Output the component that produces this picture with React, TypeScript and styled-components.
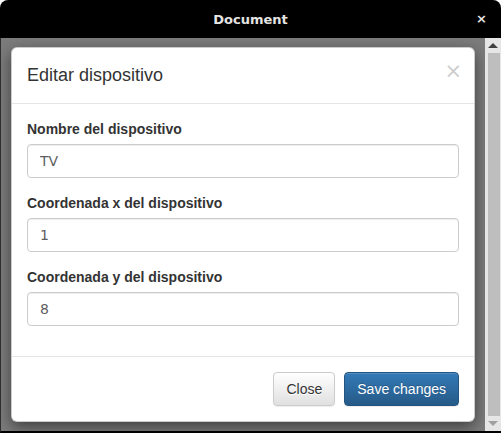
import React from "react";
import styled, { createGlobalStyle } from "styled-components";

const GlobalStyle = createGlobalStyle`
	html, body {
		margin: 0;
		padding: 0;
		background: #ffffff;
	}
	* {
		box-sizing: border-box;
	}
`;

const fields = [
	{ label: "Nombre del dispositivo", value: "TV" },
	{ label: "Coordenada x del dispositivo", value: "1" },
	{ label: "Coordenada y del dispositivo", value: "8" },
];

const App = () => {
	return (
		<>
			<GlobalStyle />
			<Window>
				<TitleBar>
					<WindowTitle>Document</WindowTitle>
					<WindowClose>×</WindowClose>
				</TitleBar>

				<Content>
					<Viewport>
						<Dialog>
							<DialogHeader>
								<DialogTitle>Editar dispositivo</DialogTitle>
								<DismissButton>×</DismissButton>
							</DialogHeader>

							<DialogBody>
								{fields.map((field) => (
									<FormGroup key={field.label}>
										<Label>{field.label}</Label>
										<Input readOnly value={field.value} />
									</FormGroup>
								))}
							</DialogBody>

							<DialogFooter>
								<Button>Close</Button>
								<Button $primary>Save changes</Button>
							</DialogFooter>
						</Dialog>
					</Viewport>

					<Scrollbar>
						<ScrollArrow $dir="up" />
						<ScrollTrack>
							<ScrollThumb />
						</ScrollTrack>
						<ScrollArrow $dir="down" />
					</Scrollbar>
				</Content>
			</Window>
		</>
	);
};

export default App;

const Window = styled.div`
	width: 501px;
	height: 433px;

	display: flex;
	flex-direction: column;

	background: #000;
	border-radius: 8px 8px 0 0;
	overflow: hidden;
`;

const TitleBar = styled.div`
	height: 38px;
	flex-shrink: 0;

	display: flex;
	align-items: center;
	justify-content: center;

	position: relative;
`;

const WindowTitle = styled.div`
	font-family: "DejaVu Sans", sans-serif;
	font-weight: 700;
	font-size: 13px;
	color: #e4e4e2;
`;

const WindowClose = styled.div`
	position: absolute;
	right: 14px;
	top: 11px;

	font-family: "DejaVu Sans", sans-serif;
	font-weight: 700;
	font-size: 13px;
	color: #e4e4e2;
`;

const Content = styled.div`
	flex: 1;
	min-height: 0;

	display: flex;

	border-left: 1px solid #2e2e2e;
	border-bottom: 2px solid #000;
`;

const Viewport = styled.div`
	flex: 1;
	min-width: 0;

	background: #7c7c7c;
	padding: 9px 10px 0 10px;
	overflow: hidden;
`;

const Dialog = styled.div`
	background: #fff;
	border: 1px solid rgba(0, 0, 0, 0.2);
	border-radius: 6px;
	box-shadow: 0 5px 15px rgba(0, 0, 0, 0.5);

	font-family: "Liberation Sans", Arial, sans-serif;
	color: #333;
`;

const DialogHeader = styled.div`
	display: flex;
	align-items: flex-start;
	justify-content: space-between;

	padding: 15px;
	border-bottom: 1px solid #e5e5e5;
`;

const DialogTitle = styled.h4`
	margin: 0;

	font-weight: 400;
	font-size: 18px;
	line-height: 25px;
	color: #333;
`;

const DismissButton = styled.div`
	margin-top: -2px;
	margin-right: -3px;

	font-family: "DejaVu Sans", sans-serif;
	font-size: 21px;
	line-height: 1;
	color: #000;
	opacity: 0.2;
`;

const DialogBody = styled.div`
	padding: 15px;
`;

const FormGroup = styled.div`
	margin-bottom: 15px;
`;

const Label = styled.label`
	display: block;
	margin-bottom: 5px;

	font-weight: 700;
	font-size: 14px;
	line-height: 20px;
	color: #333;
`;

const Input = styled.input`
	display: block;
	width: 100%;
	height: 34px;

	padding: 6px 12px;
	border: 1px solid #ccc;
	border-radius: 4px;
	box-shadow: inset 0 1px 1px rgba(0, 0, 0, 0.075);
	outline: none;

	font-family: "DejaVu Sans", sans-serif;
	font-size: 14px;
	font-weight: 400;
	color: #5e5e5e;
	background: #fff;
`;

const DialogFooter = styled.div`
	display: flex;
	justify-content: flex-end;
	gap: 9px;

	padding: 15px;
	border-top: 1px solid #e5e5e5;
`;

const Button = styled.button<{ $primary?: boolean }>`
	height: 34px;
	padding: 6px 12px;

	border: 1px solid ${(p) => (p.$primary ? "#245580" : "#ccc")};
	border-radius: 4px;

	background: ${(p) =>
		p.$primary
			? "linear-gradient(to bottom, #337ab7 0%, #265a88 100%)"
			: "linear-gradient(to bottom, #fff 0%, #e0e0e0 100%)"};
	box-shadow: inset 0 1px 0 rgba(255, 255, 255, 0.15), 0 1px 1px rgba(0, 0, 0, 0.075);

	font-family: "Liberation Sans", Arial, sans-serif;
	font-size: 14px;
	line-height: 20px;
	color: ${(p) => (p.$primary ? "#fff" : "#333")};
	text-shadow: ${(p) => (p.$primary ? "0 -1px 0 rgba(0, 0, 0, 0.2)" : "0 1px 0 #fff")};
`;

const Scrollbar = styled.div`
	width: 16px;
	flex-shrink: 0;

	display: flex;
	flex-direction: column;

	background: #e6e6e6;
`;

const ScrollArrow = styled.div<{ $dir: "up" | "down" }>`
	height: 15px;
	flex-shrink: 0;

	display: flex;
	align-items: center;
	justify-content: center;

	&::after {
		content: "";
		width: 0;
		height: 0;
		border-left: 5px solid transparent;
		border-right: 5px solid transparent;
		${(p) =>
			p.$dir === "up"
				? "border-bottom: 5px solid #404040;"
				: "border-top: 5px solid #a0a0a0;"}
	}
`;

const ScrollTrack = styled.div`
	flex: 1;
	padding: 0 1px 0 3px;
`;

const ScrollThumb = styled.div`
	height: 100%;
	background: #bebebe;
`;
